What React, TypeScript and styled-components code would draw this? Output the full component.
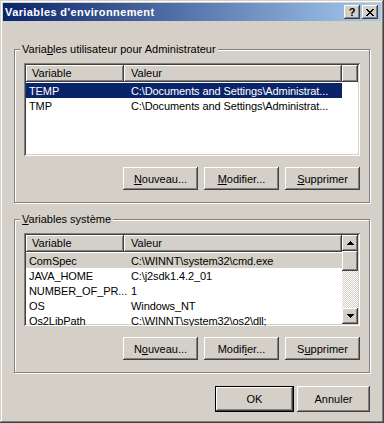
import React from "react";
import styled, { createGlobalStyle } from "styled-components";

const FACE = "#D4D0C8";
const SHADOW = "#808080";
const DARK = "#404040";
const NAVY = "#0A246A";

const RAISED = `inset -1px -1px ${DARK}, inset 1px 1px #fff, inset -2px -2px ${SHADOW}, inset 2px 2px ${FACE}`;

const GlobalStyle = createGlobalStyle`
	html, body {
		margin: 0;
		padding: 0;
		background: ${FACE};
	}
	body {
		font-family: "Liberation Sans", Arial, sans-serif;
		font-size: 11px;
		color: #000;
	}
`;

type Column = { width: number; pad: number };

const COLUMNS: Column[] = [
	{ width: 98, pad: 3 },
	{ width: 218, pad: 7 },
];

const USER_VARS = [
	["TEMP", "C:\\Documents and Settings\\Administrat..."],
	["TMP", "C:\\Documents and Settings\\Administrat..."],
];

const SYSTEM_VARS = [
	["ComSpec", "C:\\WINNT\\system32\\cmd.exe"],
	["JAVA_HOME", "C:\\j2sdk1.4.2_01"],
	["NUMBER_OF_PR...", "1"],
	["OS", "Windows_NT"],
	["Os2LibPath", "C:\\WINNT\\system32\\os2\\dll;"],
];

const CloseGlyph = () => (
	<svg width="8" height="7" viewBox="0 0 8 7" shapeRendering="crispEdges">
		<path d="M0 0h2v1H0z M6 0h2v1H6z M1 1h2v1H1z M5 1h2v1H5z M2 2h4v1H2z M3 3h2v1H3z M2 4h4v1H2z M1 5h2v1H1z M5 5h2v1H5z M0 6h2v1H0z M6 6h2v1H6z" fill="#000" />
	</svg>
);

const Arrow = ({ down = false }: { down?: boolean }) => (
	<svg width="7" height="4" viewBox="0 0 7 4" shapeRendering="crispEdges" style={down ? { transform: "scaleY(-1)" } : undefined}>
		<path d="M3 0h1v1H3z M2 1h3v1H2z M1 2h5v1H1z M0 3h7v1H0z" fill="#000" />
	</svg>
);

type ListProps = {
	rows: string[][];
	selected: number;
	focused: boolean;
	scroll?: boolean;
};

const VarList = ({ rows, selected, focused, scroll = false }: ListProps) => (
	<ListBox>
		<ListMain>
			<Header>
				<HeaderCell width={COLUMNS[0].width} pad={6}>Variable</HeaderCell>
				<HeaderCell width={COLUMNS[1].width} pad={7}>Valeur</HeaderCell>
				{!scroll && <HeaderFiller />}
			</Header>
			<Rows>
				{rows.map((row, i) => (
					<Row key={row[0]} state={i === selected ? (focused ? "focus" : "inactive") : "none"}>
						{row.map((text, c) => (
							<Cell key={c} width={COLUMNS[c].width} pad={COLUMNS[c].pad}>{text}</Cell>
						))}
					</Row>
				))}
			</Rows>
		</ListMain>
		{scroll && (
			<ScrollBar>
				<ScrollButton><Arrow /></ScrollButton>
				<Thumb />
				<Track />
				<ScrollButton><Arrow down /></ScrollButton>
			</ScrollBar>
		)}
	</ListBox>
);

export default function App() {
	return (
		<>
			<GlobalStyle />
			<Window>
				<TitleBar>
					<Title>Variables d'environnement</Title>
					<CaptionButton><HelpMark>?</HelpMark></CaptionButton>
					<CaptionButton><CloseGlyph /></CaptionButton>
				</TitleBar>
				<Content>
					<Group>
						<Legend>Varia<u>b</u>les utilisateur pour Administrateur</Legend>
						<VarList rows={USER_VARS} selected={0} focused />
						<ButtonRow>
							<Button><u>N</u>ouveau...</Button>
							<Button><u>M</u>odifier...</Button>
							<Button><u>S</u>upprimer</Button>
						</ButtonRow>
					</Group>
					<Group spaced>
						<Legend><u>V</u>ariables système</Legend>
						<VarList rows={SYSTEM_VARS} selected={0} focused={false} scroll />
						<ButtonRow>
							<Button>N<u>o</u>uveau...</Button>
							<Button>Modif<u>i</u>er...</Button>
							<Button>S<u>u</u>pprimer</Button>
						</ButtonRow>
					</Group>
					<Actions>
						<Button width={79} height={26} isDefault>OK</Button>
						<Button width={73} height={26}>Annuler</Button>
					</Actions>
				</Content>
			</Window>
		</>
	);
}

const Window = styled.div`
	box-sizing: border-box;
	width: 384px;
	height: 423px;
	padding: 3px;
	background: ${FACE};
	box-shadow: inset -1px -1px ${DARK}, inset 1px 1px ${FACE}, inset -2px -2px ${SHADOW}, inset 2px 2px #fff;
	display: flex;
	flex-direction: column;
`;

const TitleBar = styled.div`
	height: 18px;
	display: flex;
	align-items: center;
	gap: 2px;
	padding: 0 3px 0 2px;
	background: linear-gradient(to right, ${NAVY}, #A6CAF0);
`;

const Title = styled.div`
	flex: 1;
	color: #fff;
	font-weight: bold;
	font-size: 11px;
	letter-spacing: 0.4px;
	white-space: nowrap;
`;

const CaptionButton = styled.div`
	box-sizing: border-box;
	width: 16px;
	height: 14px;
	display: flex;
	align-items: center;
	justify-content: center;
	background: ${FACE};
	box-shadow: ${RAISED};
`;

const HelpMark = styled.span`
	font-weight: bold;
	font-size: 11px;
	line-height: 11px;
`;

const Content = styled.div`
	flex: 1;
	display: flex;
	flex-direction: column;
	padding: 28px 11px 0;
`;

const Group = styled.div<{ spaced?: boolean }>`
	box-sizing: border-box;
	height: 154px;
	margin-top: ${({ spaced }) => (spaced ? 16 : 0)}px;
	border: 1px solid ${SHADOW};
	box-shadow: inset 1px 1px #fff, 1px 1px #fff;
	padding: 0 9px 12px;
	display: flex;
	flex-direction: column;
`;

const Legend = styled.div`
	align-self: flex-start;
	height: 13px;
	line-height: 13px;
	margin: -7px 0 0 -4px;
	padding: 0 2px;
	background: ${FACE};
	white-space: nowrap;
`;

const ListBox = styled.div`
	box-sizing: border-box;
	height: 93px;
	margin-top: 7px;
	padding: 2px;
	background: #fff;
	box-shadow: inset 1px 1px ${SHADOW}, inset -1px -1px #fff, inset 2px 2px ${DARK}, inset -2px -2px ${FACE};
	display: flex;
	overflow: hidden;
`;

const ListMain = styled.div`
	flex: 1;
	display: flex;
	flex-direction: column;
	min-width: 0;
`;

const Header = styled.div`
	display: flex;
	height: 17px;
	flex-shrink: 0;
`;

const HeaderCell = styled.div<{ width: number; pad: number }>`
	box-sizing: border-box;
	width: ${({ width }) => width}px;
	padding-left: ${({ pad }) => pad}px;
	line-height: 16px;
	background: ${FACE};
	box-shadow: inset -1px -1px ${DARK}, inset 1px 1px #fff, inset -2px -2px ${SHADOW};
	white-space: nowrap;
`;

const HeaderFiller = styled.div`
	flex: 1;
	background: ${FACE};
	box-shadow: inset -1px -1px ${DARK}, inset 1px 1px #fff, inset -2px -2px ${SHADOW};
`;

const Rows = styled.div`
	padding-top: 1px;
	display: flex;
	flex-direction: column;
`;

const Row = styled.div<{ state: "focus" | "inactive" | "none" }>`
	display: flex;
	height: 15px;
	align-items: center;
	width: ${COLUMNS[0].width + COLUMNS[1].width}px;
	background: ${({ state }) => (state === "focus" ? NAVY : state === "inactive" ? FACE : "transparent")};
	color: ${({ state }) => (state === "focus" ? "#fff" : "#000")};
`;

const Cell = styled.div<{ width: number; pad: number }>`
	box-sizing: border-box;
	width: ${({ width }) => width}px;
	padding-left: ${({ pad }) => pad}px;
	white-space: nowrap;
	letter-spacing: -0.1px;
`;

const ScrollBar = styled.div`
	width: 16px;
	display: flex;
	flex-direction: column;
`;

const ScrollButton = styled.div`
	box-sizing: border-box;
	width: 16px;
	height: 16px;
	flex-shrink: 0;
	display: flex;
	align-items: center;
	justify-content: center;
	background: ${FACE};
	box-shadow: ${RAISED};
`;

const Thumb = styled.div`
	height: 20px;
	flex-shrink: 0;
	background: ${FACE};
	box-shadow: ${RAISED};
`;

const Track = styled.div`
	flex: 1;
	background: repeating-conic-gradient(#fff 0 25%, ${FACE} 0 50%) 0 0 / 2px 2px;
`;

const ButtonRow = styled.div`
	display: flex;
	justify-content: flex-end;
	gap: 6px;
	margin-top: 11px;
`;

const Button = styled.button<{ width?: number; height?: number; isDefault?: boolean }>`
	box-sizing: border-box;
	width: ${({ width = 75 }) => width}px;
	height: ${({ height = 23 }) => height}px;
	padding: 0;
	border: none;
	background: ${FACE};
	font-family: "Liberation Sans", Arial, sans-serif;
	font-size: 11px;
	color: #000;
	box-shadow: ${({ isDefault }) =>
		isDefault
			? `inset 0 0 0 1px #000, inset -2px -2px ${DARK}, inset 2px 2px #fff, inset -3px -3px ${SHADOW}`
			: RAISED};
`;

const Actions = styled.div`
	display: flex;
	justify-content: flex-end;
	gap: 3px;
	margin-top: 13px;
`;
